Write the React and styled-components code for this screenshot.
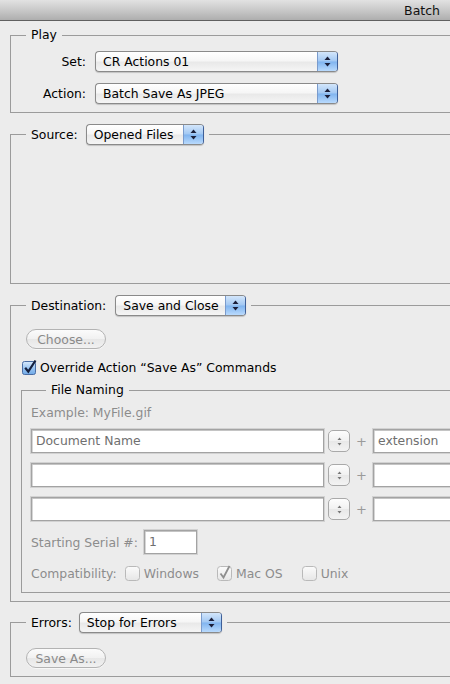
import React from "react";
import styled, { createGlobalStyle } from "styled-components";

const Global = createGlobalStyle`
  html, body { margin: 0; padding: 0; background: #ececec; }
  body { width: 450px; height: 684px; overflow: hidden; font-family: "DejaVu Sans", "Liberation Sans", sans-serif; font-size: 12.4px; color: #000; }
  * { box-sizing: border-box; }
`;

const Window = styled.div`
  width: 450px;
  height: 684px;
  overflow: hidden;
  background: #ececec;
`;

const TitleBar = styled.div`
  height: 21px;
  background: linear-gradient(#e2e2e2, #c9c9c9 50%, #aeaeae);
  border-bottom: 1px solid #606060;
  display: flex;
  justify-content: flex-end;
  align-items: center;
  padding-right: 10px;
  font-size: 12.5px;
  color: #111;
`;

const Content = styled.div`
  padding: 6px 0 0 10px;
  width: 500px;
  display: flex;
  flex-direction: column;
`;

const Group = styled.fieldset`
  margin: ${p => p.$mt || 0}px 0 0 0;
  padding: 0 0 ${p => p.$pb || 0}px ${p => p.$pl || 0}px;
  border: 1px solid #9b9b9b;
  min-width: 0;
  display: flex;
  flex-direction: column;
`;

const Legend = styled.legend`
  margin-left: 15px;
  padding: 0 5px;
  display: flex;
  align-items: center;
  gap: ${p => p.$gap || 0}px;
  line-height: 16px;
  color: ${p => (p.$dim ? "#8a8a8a" : "#000")};
`;

const FormGrid = styled.div`
  display: grid;
  grid-template-columns: 75px 243px;
  column-gap: 9px;
  row-gap: 11px;
  margin-top: 8px;
  align-items: center;
`;

const Label = styled.span`
  text-align: ${p => (p.$right ? "right" : "left")};
  color: ${p => (p.$dim ? "#8c8c8c" : "#000")};
  white-space: nowrap;
`;

const PopUpBox = styled.div`
  display: inline-flex;
  width: ${p => p.$w}px;
  height: 21px;
  border: 1px solid #8a8a8a;
  border-right-color: #3e5f98;
  border-radius: 4px;
  background: linear-gradient(#ffffff, #f6f6f6 45%, #e9e9e9 55%, #f5f5f5);
  box-shadow: 0 1px 1px rgba(0, 0, 0, 0.18);
  overflow: hidden;
  flex-shrink: 0;
`;

const PopText = styled.span`
  flex: 1;
  padding-left: 7px;
  line-height: 19px;
  white-space: nowrap;
  color: #000;
`;

const PopArrows = styled.span`
  width: 20px;
  border-left: 1px solid #7a9bcc;
  background: linear-gradient(#d3e6fb, #a2c8f3 48%, #80b4ef 52%, #b9dafd);
  display: flex;
  align-items: center;
  justify-content: center;
`;

const PopUp = ({ w, children }) => (
  <PopUpBox $w={w}>
    <PopText>{children}</PopText>
    <PopArrows>
      <svg width="7" height="11" viewBox="0 0 7 11">
        <path d="M3.5 0.5 L6.5 4 L0.5 4 Z" fill="#1b1f3a" />
        <path d="M0.5 7 L6.5 7 L3.5 10.5 Z" fill="#1b1f3a" />
      </svg>
    </PopArrows>
  </PopUpBox>
);

const EmptyArea = styled.div`
  height: ${p => p.$h}px;
`;

const PillButton = styled.div`
  width: 80px;
  height: 20px;
  border: 1px solid #b3b3b3;
  border-radius: 10px;
  background: linear-gradient(#fbfbfb, #f1f1f1 50%, #e7e7e7 51%, #f1f1f1);
  color: #8a8a8a;
  display: flex;
  align-items: center;
  justify-content: center;
  margin: ${p => p.$mt}px 0 0 15px;
  box-shadow: 0 1px 0 rgba(255, 255, 255, 0.6);
`;

const CheckRow = styled.div`
  display: flex;
  align-items: center;
  gap: 3px;
  margin: 11px 0 0 11px;
  height: 15px;
`;

const CheckSvg = styled.svg`
  flex-shrink: 0;
  overflow: visible;
`;

const BlueCheck = () => (
  <CheckSvg width="15" height="15" viewBox="0 0 15 15">
    <defs>
      <linearGradient id="bc" x1="0" y1="0" x2="0" y2="1">
        <stop offset="0" stopColor="#d9eafc" />
        <stop offset="0.5" stopColor="#9cc6f2" />
        <stop offset="1" stopColor="#6fa8e6" />
      </linearGradient>
    </defs>
    <rect x="0.5" y="1.5" width="13" height="13" rx="2" fill="url(#bc)" stroke="#4a6da4" />
    <path d="M3.2 7.8 L6.3 11.6 L13.5 0.5" fill="none" stroke="#15203e" strokeWidth="2.2" />
  </CheckSvg>
);

const GreyCheck = ({ checked }) => (
  <CheckSvg width="15" height="15" viewBox="0 0 15 15">
    <defs>
      <linearGradient id="gc" x1="0" y1="0" x2="0" y2="1">
        <stop offset="0" stopColor="#fbfbfb" />
        <stop offset="1" stopColor="#e6e6e6" />
      </linearGradient>
    </defs>
    <rect x="0.5" y="0.5" width="14" height="14" rx="3" fill="url(#gc)" stroke="#b9b9b9" />
    {checked && (
      <path d="M3.5 7.5 L6.5 11.5 L12.5 0" fill="none" stroke="#8e8e8e" strokeWidth="1.8" />
    )}
  </CheckSvg>
);

const SubGroup = styled(Group)`
  margin: 7px 0 0 10px;
  padding: 0 0 0 9px;
`;

const Example = styled.div`
  color: #8c8c8c;
  margin-top: 7px;
  line-height: 16px;
`;

const NameRows = styled.div`
  display: flex;
  flex-direction: column;
  gap: 10px;
  margin-top: 8px;
`;

const NameRow = styled.div`
  display: flex;
  align-items: center;
`;

const Field = styled.div`
  width: ${p => p.$w}px;
  height: 24px;
  background: #fff;
  border: 1px solid #a3a3a3;
  box-shadow: inset 0 1px 0 #c4c4c4, inset 1px 0 0 #d6d6d6, 0 0 0 1px #d2d2d2;
  padding-left: 4px;
  line-height: 22px;
  color: #6f6f6f;
  flex-shrink: 0;
  white-space: nowrap;
`;

const Stepper = styled.div`
  width: 22px;
  height: 22px;
  margin-left: 4px;
  border: 1px solid #a9a9a9;
  border-radius: 5px;
  background: linear-gradient(#fdfdfd, #f1f1f1 50%, #e8e8e8 51%, #f3f3f3);
  display: flex;
  align-items: center;
  justify-content: center;
`;

const Plus = styled.span`
  width: 23px;
  text-align: center;
  color: #9a9a9a;
  font-size: 13px;
`;

const SerialRow = styled.div`
  display: flex;
  align-items: center;
  gap: 6px;
  margin-top: 9px;
`;

const CompatRow = styled.div`
  display: flex;
  align-items: center;
  margin-top: 10px;
  height: 18px;
  margin-bottom: 10px;
`;

const CompatItem = styled.span`
  display: flex;
  align-items: center;
  gap: 4px;
  margin-left: ${p => p.$ml}px;
  color: #8c8c8c;
`;

const StepArrows = () => (
  <svg width="5" height="9" viewBox="0 0 5 9">
    <path d="M2.5 0.5 L4.5 3 L0.5 3 Z" fill="#777" />
    <path d="M0.5 6 L4.5 6 L2.5 8.5 Z" fill="#777" />
  </svg>
);

export default function App() {
  return (
    <Window>
      <Global />
      <TitleBar>Batch</TitleBar>
      <Content>
        <Group $pb={8}>
          <Legend>Play</Legend>
          <FormGrid>
            <Label $right>Set:</Label>
            <PopUp w={243}>CR Actions 01</PopUp>
            <Label $right>Action:</Label>
            <PopUp w={243}>Batch Save As JPEG</PopUp>
          </FormGrid>
        </Group>

        <Group $mt={11}>
          <Legend $gap={8}>
            Source: <PopUp w={118}>Opened Files</PopUp>
          </Legend>
          <EmptyArea $h={138} />
        </Group>

        <Group $mt={11} $pb={8}>
          <Legend $gap={9}>
            Destination: <PopUp w={131}>Save and Close</PopUp>
          </Legend>
          <PillButton $mt={13}>Choose...</PillButton>
          <CheckRow>
            <BlueCheck />
            <Label>Override Action “Save As” Commands</Label>
          </CheckRow>
          <SubGroup>
            <Legend>File Naming</Legend>
            <Example>Example: MyFile.gif</Example>
            <NameRows>
              <NameRow>
                <Field $w={293}>Document Name</Field>
                <Stepper><StepArrows /></Stepper>
                <Plus>+</Plus>
                <Field $w={120}>extension</Field>
              </NameRow>
              <NameRow>
                <Field $w={293} />
                <Stepper><StepArrows /></Stepper>
                <Plus>+</Plus>
                <Field $w={120} />
              </NameRow>
              <NameRow>
                <Field $w={293} />
                <Stepper><StepArrows /></Stepper>
                <Plus>+</Plus>
                <Field $w={120} />
              </NameRow>
            </NameRows>
            <SerialRow>
              <Label $dim>Starting Serial #:</Label>
              <Field $w={53}>1</Field>
            </SerialRow>
            <CompatRow>
              <Label $dim>Compatibility:</Label>
              <CompatItem $ml={8}><GreyCheck />Windows</CompatItem>
              <CompatItem $ml={18}><GreyCheck checked />Mac OS</CompatItem>
              <CompatItem $ml={19}><GreyCheck />Unix</CompatItem>
            </CompatRow>
          </SubGroup>
        </Group>

        <Group $mt={10} $pb={8}>
          <Legend $gap={7}>
            Errors: <PopUp w={143}>Stop for Errors</PopUp>
          </Legend>
          <PillButton $mt={15}>Save As...</PillButton>
        </Group>
      </Content>
    </Window>
  );
}
